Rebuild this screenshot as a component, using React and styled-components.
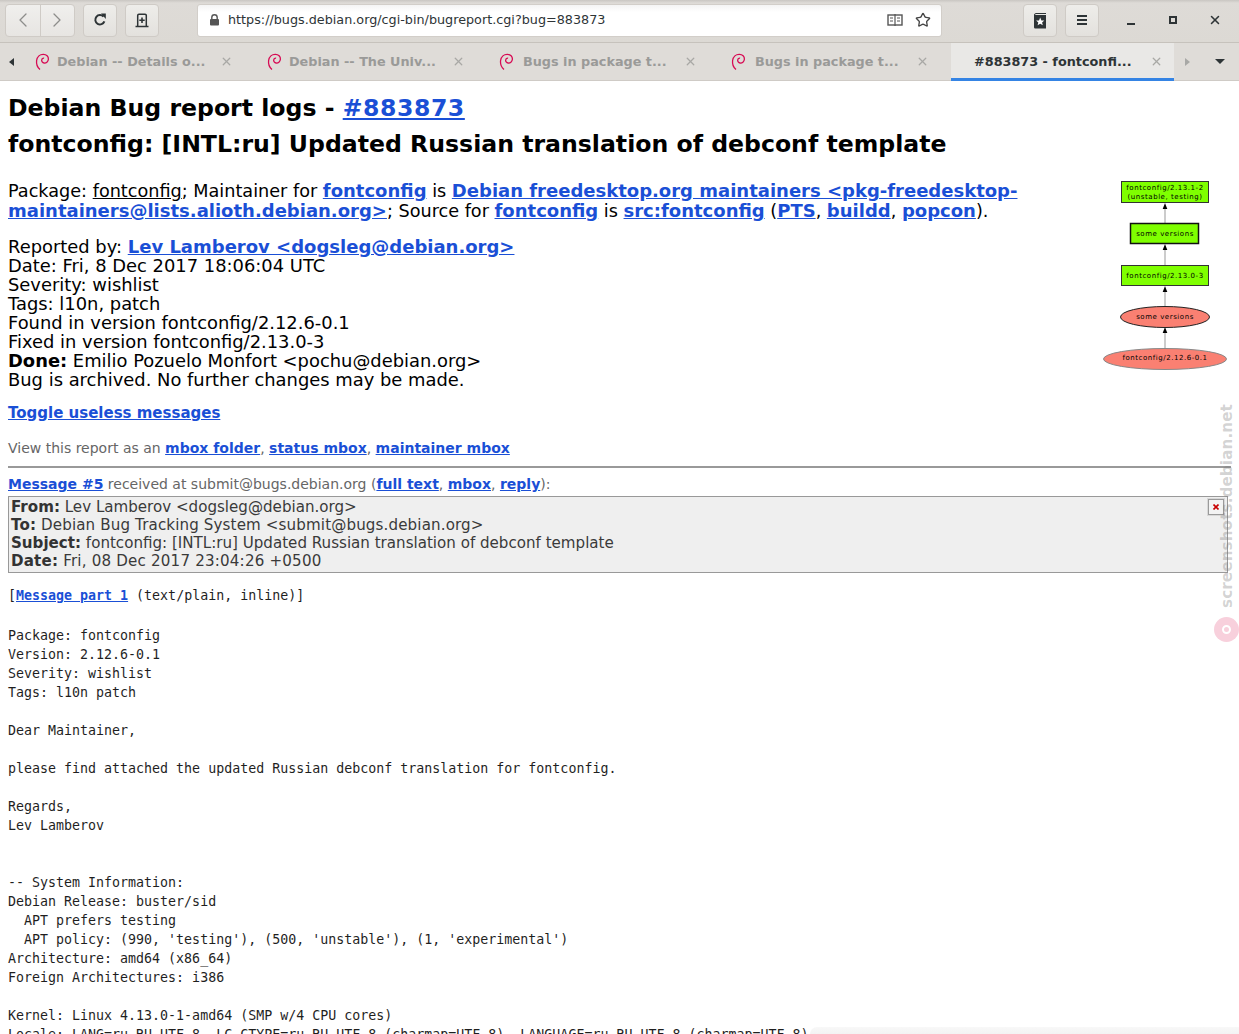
import React from "react";
import styled, { createGlobalStyle } from "styled-components";
import { ChevronLeft, ChevronRight, Star, X } from "lucide-react";

const GlobalStyle = createGlobalStyle`
  html, body {
    margin: 0;
    padding: 0;
    background: #fff;
    overflow: hidden;
    height: 1034px;
  }
`;

const Page = styled.div`
  position: relative;
  width: 1239px;
  height: 1034px;
  overflow: hidden;
  font-family: "DejaVu Sans", sans-serif;
  color: #000;
`;

const Toolbar = styled.div`
  height: 43px;
  box-sizing: border-box;
  display: flex;
  align-items: center;
  padding: 0 0 2px 5px;
  background: linear-gradient(#c9c6c2 0, #dedbd7 3px, #dcd9d4 100%);
  border-bottom: 1px solid #c6c2bc;
`;

const NavGroup = styled.div`
  display: flex;
  width: 70px;
  height: 33px;
  margin-right: 8px;
  box-sizing: border-box;
  background: linear-gradient(#f0efed, #e7e5e2);
  border: 1px solid #cfcbc6;
  border-radius: 4px;
`;

const NavButton = styled.div`
  flex: 1;
  display: flex;
  align-items: center;
  justify-content: center;
  color: #8d8d8b;
  & + & {
    border-left: 1px solid #cfcbc6;
  }
`;

const ToolButton = styled.div`
  width: 34px;
  height: 33px;
  margin-right: ${(p) => p.$gap}px;
  box-sizing: border-box;
  flex: none;
  display: flex;
  align-items: center;
  justify-content: center;
  background: linear-gradient(#eeedea, #e3e1dd);
  border: 1px solid #cfcbc6;
  border-radius: 4px;
`;

const UrlBar = styled.div`
  width: 745px;
  height: 33px;
  margin-right: 81px;
  flex: none;
  box-sizing: border-box;
  display: flex;
  align-items: center;
  padding: 0 10px 0 11px;
  background: linear-gradient(#f4f4f4 0, #fff 7px);
  border: 1px solid #d2cec9;
  border-radius: 3px;
  font-size: 12.77px;
  color: #2e3436;
`;

const UrlText = styled.span`
  flex: 1;
  margin: 0 0 2px 8px;
  white-space: nowrap;
`;

const ReaderIcon = styled.svg`
  margin-right: 12px;
`;

const WindowControls = styled.div`
  display: flex;
  margin-left: 11px;
`;

const WindowControl = styled.div`
  width: 42px;
  flex: none;
  display: flex;
  align-items: center;
  justify-content: center;
  color: #2e3436;
`;

const TabBar = styled.div`
  height: 38px;
  display: flex;
  align-items: stretch;
  background: #dfdcd8;
  border-bottom: 1px solid #cfcbc6;
  box-sizing: border-box;
`;

const ArrowSlot = styled.div`
  width: ${(p) => p.$w}px;
  flex: none;
  display: flex;
  align-items: center;
  justify-content: center;
`;

const Tab = styled.div`
  width: ${(p) => (p.$active ? 223 : 232)}px;
  flex: none;
  box-sizing: border-box;
  display: flex;
  align-items: center;
  padding: ${(p) => (p.$active ? "2px 0 0 23px" : "0 0 0 12px")};
  font-size: 12.8px;
  font-weight: bold;
  white-space: nowrap;
  color: ${(p) => (p.$active ? "#2e3436" : "#9a9a98")};
  background: ${(p) => (p.$active ? "#e9e8e6" : "transparent")};
  border-bottom: ${(p) => (p.$active ? "3px solid #3584e4" : "none")};
  margin-bottom: ${(p) => (p.$active ? "-1px" : "0")};
`;

const TabTitle = styled.span`
  width: ${(p) => p.$w}px;
  margin-left: ${(p) => p.$ml}px;
  flex: none;
`;

const TabClose = styled.span`
  display: flex;
  margin-left: ${(p) => p.$ml}px;
  color: #a9a8a5;
`;

const Content = styled.div`
  padding: 9px 8px 0;
  height: 953px;
  box-sizing: border-box;
  overflow: hidden;
  font-size: 17.9px;
  line-height: 19px;
`;

const Heading = styled.h1`
  margin: 0;
  font-size: 23.6px;
  line-height: 36px;
  font-weight: bold;
`;

const Graph = styled.svg`
  float: right;
  margin: 7px 4px 0 10px;
  display: block;
`;

const Para = styled.p`
  margin: ${(p) => p.$top || 0}px 0 0;
  line-height: ${(p) => p.$lh || 19}px;
  font-size: ${(p) => p.$size || 17.9}px;
  color: ${(p) => p.$color || "#000"};
`;

const Link = styled.a`
  color: #1a4fd6;
  font-weight: bold;
  text-decoration: underline;
`;

const BugLink = styled(Link)`
  letter-spacing: 0.55px;
`;

const BodyLink = styled(Link)`
  font-size: 18px;
`;

const PlainUnder = styled.span`
  text-decoration: underline;
`;

const Rule = styled.hr`
  margin: 8px 0;
  border: none;
  border-top: 2px solid #999;
  clear: both;
`;

const MessageLine = styled.div`
  font-size: 14px;
  line-height: 17px;
  color: #666;
`;

const HeaderBox = styled.div`
  position: relative;
  margin: 3px 3px 0 0;
  padding: 1px 2px 2px;
  background: #efefef;
  border: 1px solid #999;
  font-size: 15.1px;
  line-height: 18px;
  color: #3a3a3a;
  & b {
    color: #333;
  }
`;

const HeaderRow = styled.div`
  white-space: nowrap;
  letter-spacing: ${(p) => p.$track || 0}px;
`;

const CloseToggle = styled.div`
  position: absolute;
  top: 2px;
  right: 3px;
  width: 16px;
  height: 16px;
  box-sizing: border-box;
  background: #f3f3f3;
  border: 1px solid #9a9a9a;
  outline: 1px solid #d8d8d8;
  display: flex;
  align-items: center;
  justify-content: center;
  color: #c80000;
`;

const Pre = styled.pre`
  margin: ${(p) => p.$top}px 0 0;
  font-family: "DejaVu Sans Mono", monospace;
  font-size: 13.3px;
  line-height: 19px;
  color: #1f1f1f;
`;

const Watermark = styled.div`
  position: absolute;
  left: 1218px;
  top: 405px;
  height: 203px;
  writing-mode: vertical-rl;
  transform: rotate(180deg);
  font-size: 15.2px;
  font-weight: bold;
  letter-spacing: 0.1px;
  line-height: 18px;
  color: rgba(120, 120, 120, 0.33);
  white-space: nowrap;
`;

const WatermarkLogo = styled.div`
  position: absolute;
  left: 1214px;
  top: 617px;
  width: 25px;
  height: 25px;
  box-sizing: border-box;
  border-radius: 50%;
  background: #f8d0dc;
  display: flex;
  align-items: center;
  justify-content: center;
`;

const LogoHole = styled.div`
  width: 9px;
  height: 9px;
  box-sizing: border-box;
  border: 2px solid #fff;
  border-radius: 50%;
`;

const BottomFade = styled.div`
  position: absolute;
  left: 810px;
  right: 0;
  bottom: 0;
  height: 7px;
  background: linear-gradient(#f8f8f8, #f3f3f3);
  border-radius: 8px 0 0 0;
`;

function Swirl() {
  return (
    <svg width="16" height="18" viewBox="0 0 16 18" fill="none" stroke="#d70a53" strokeWidth="1.3">
      <path d="M5 16.5C2.5 14.5 1.2 11 1.6 7.5 2.1 3.6 5 1.2 8.4 1.3c3 .1 5.2 2.3 5 5-.2 2.4-2.3 4-4.3 3.7-1.6-.2-2.7-1.6-2.4-3.1.2-1.2 1.3-2 2.4-1.8" />
    </svg>
  );
}

function Arrow({ dir, color }) {
  const points = dir === "left" ? "6,1 6,9 1,5" : dir === "right" ? "1,1 1,9 6,5" : "0,1 10,1 5,6";
  return (
    <svg width={dir === "down" ? 10 : 7} height={dir === "down" ? 7 : 10} viewBox={dir === "down" ? "0 0 10 7" : "0 0 7 10"}>
      <polygon points={points} fill={color} />
    </svg>
  );
}

function VersionGraph() {
  const label = { fontFamily: "DejaVu Sans, sans-serif", fontSize: 7, fill: "#000", textAnchor: "middle", letterSpacing: 0.55 };
  const edges = [
    [34, 54],
    [75, 96],
    [117, 137],
    [158, 179],
  ];
  return (
    <Graph width="130" height="202" viewBox="0 0 130 202">
      {edges.map(([top, bottom]) => (
        <g key={top}>
          <line x1="68" y1={top + 4} x2="68" y2={bottom} stroke="#aaa" strokeWidth="1.2" />
          <polygon points={`68,${top} 65.7,${top + 6} 70.3,${top + 6}`} fill="#000" />
        </g>
      ))}
      <rect x="24.5" y="12.5" width="87" height="21" fill="#7fff00" stroke="#333" />
      <text x="68" y="21" {...label}>fontconfig/2.13.1-2</text>
      <text x="68" y="30" {...label}>(unstable, testing)</text>
      <rect x="33.5" y="54.5" width="68" height="20" fill="#7fff00" stroke="#111" strokeWidth="1.5" />
      <text x="68" y="67" {...label}>some versions</text>
      <rect x="24.5" y="96.5" width="87" height="20" fill="#7fff00" stroke="#333" />
      <text x="68" y="109" {...label}>fontconfig/2.13.0-3</text>
      <ellipse cx="68" cy="148" rx="44.5" ry="10.5" fill="#fa8072" stroke="#222" />
      <text x="68" y="150" {...label}>some versions</text>
      <ellipse cx="68" cy="190" rx="61.5" ry="10.5" fill="#fa8072" stroke="#888" />
      <text x="68" y="191" {...label}>fontconfig/2.12.6-0.1</text>
    </Graph>
  );
}

const tabs = [
  { title: "Debian -- Details o...", ml: 6, close: 13 },
  { title: "Debian -- The Univ...", ml: 6, close: 13 },
  { title: "Bugs in package t...", ml: 8, close: 11 },
  { title: "Bugs in package t...", ml: 8, close: 11 },
];

const body = `Package: fontconfig
Version: 2.12.6-0.1
Severity: wishlist
Tags: l10n patch

Dear Maintainer,

please find attached the updated Russian debconf translation for fontconfig.

Regards,
Lev Lamberov


-- System Information:
Debian Release: buster/sid
  APT prefers testing
  APT policy: (990, 'testing'), (500, 'unstable'), (1, 'experimental')
Architecture: amd64 (x86_64)
Foreign Architectures: i386

Kernel: Linux 4.13.0-1-amd64 (SMP w/4 CPU cores)
Locale: LANG=ru_RU.UTF-8, LC_CTYPE=ru_RU.UTF-8 (charmap=UTF-8), LANGUAGE=ru_RU.UTF-8 (charmap=UTF-8)`;

export default function App() {
  return (
    <Page>
      <GlobalStyle />
      <Toolbar>
        <NavGroup>
          <NavButton><ChevronLeft size={24} strokeWidth={1.3} /></NavButton>
          <NavButton><ChevronRight size={24} strokeWidth={1.3} /></NavButton>
        </NavGroup>
        <ToolButton $gap={8}>
          <svg width="14" height="14" viewBox="0 0 14 14" fill="none">
            <path d="M11.4 8.4A4.7 4.7 0 1 1 10.5 3.6" stroke="#2e3436" strokeWidth="2" />
            <polygon points="8,0.5 12.8,0.5 12.8,6 " fill="#2e3436" />
          </svg>
        </ToolButton>
        <ToolButton $gap={38}>
          <svg width="14" height="15" viewBox="0 0 14 15" fill="none" stroke="#2e3436">
            <path d="M2.7 13V2.5a1.2 1.2 0 0 1 1.2-1.2h6.2a1.2 1.2 0 0 1 1.2 1.2V13" strokeWidth="1.5" />
            <path d="M0.5 13.5h13" strokeWidth="1.5" />
            <path d="M7 4.5v5.5M4.3 7.2h5.4" strokeWidth="1.6" />
          </svg>
        </ToolButton>
        <UrlBar>
          <svg width="11" height="12" viewBox="0 0 11 12">
            <path d="M2.8 5V3.5a2.7 2.7 0 0 1 5.4 0V5" fill="none" stroke="#555" strokeWidth="1.4" />
            <rect x="1" y="5" width="9" height="6.5" rx="1" fill="#555" />
          </svg>
          <UrlText>https://bugs.debian.org/cgi-bin/bugreport.cgi?bug=883873</UrlText>
          <ReaderIcon width="16" height="14" viewBox="0 0 16 14" fill="none" stroke="#555">
            <rect x="1" y="2" width="14" height="10" strokeWidth="1.4" />
            <path d="M8 1v12" strokeWidth="1.2" />
            <path d="M3 5h3M3 8h3M10 5h3M10 8h3" strokeWidth="1.2" />
          </ReaderIcon>
          <Star size={16} strokeWidth={2} color="#444" />
        </UrlBar>
        <ToolButton $gap={8}>
          <svg width="14" height="17" viewBox="0 0 14 17">
            <path d="M1 3.2C1 2 2 1 3.2 1H13v1H3.2C2.6 2 2.1 2.4 2 3h11v13.5H2.2A1.2 1.2 0 0 1 1 15.3z" fill="#2e3436" />
            <polygon points="7.2,5.5 8.4,8.4 11.3,8.6 9.1,10.5 9.8,13.3 7.2,11.8 4.6,13.3 5.3,10.5 3.1,8.6 6,8.4" fill="#fff" />
          </svg>
        </ToolButton>
        <ToolButton $gap={0}>
          <svg width="12" height="12" viewBox="0 0 12 12" fill="#2e3436">
            <rect x="1" y="1" width="10" height="2" />
            <rect x="1" y="5" width="10" height="2" />
            <rect x="1" y="9" width="10" height="2" />
          </svg>
        </ToolButton>
        <WindowControls>
          <WindowControl>
            <svg width="12" height="12" viewBox="0 0 12 12" fill="#2e3436"><rect x="2" y="9" width="8" height="2" /></svg>
          </WindowControl>
          <WindowControl>
            <svg width="12" height="12" viewBox="0 0 12 12" fill="none" stroke="#2e3436" strokeWidth="2"><rect x="3" y="3" width="6" height="6" /></svg>
          </WindowControl>
          <WindowControl><X size={14} strokeWidth={2.6} /></WindowControl>
        </WindowControls>
      </Toolbar>
      <TabBar>
        <ArrowSlot $w={23}><Arrow dir="left" color="#2e3436" /></ArrowSlot>
        {tabs.map((tab, i) => (
          <Tab key={i}>
            <Swirl />
            <TabTitle $w={150} $ml={tab.ml}>{tab.title}</TabTitle>
            <TabClose $ml={tab.close}><X size={13} strokeWidth={2.4} /></TabClose>
          </Tab>
        ))}
        <Tab $active>
          <TabTitle $w={159} $ml={0}>#883873 - fontconfi...</TabTitle>
          <TabClose $ml={17}><X size={13} strokeWidth={2.4} /></TabClose>
        </Tab>
        <ArrowSlot $w={26}><Arrow dir="right" color="#a8a8a6" /></ArrowSlot>
        <ArrowSlot $w={40}><Arrow dir="down" color="#2e3436" /></ArrowSlot>
      </TabBar>
      <Content>
        <Heading>
          Debian Bug report logs - <BugLink>#883873</BugLink>
        </Heading>
        <Heading>fontconfig: [INTL:ru] Updated Russian translation of debconf template</Heading>
        <VersionGraph />
        <Para $top={19} $lh={20} $size={17.65}>
          Package: <PlainUnder>fontconfig</PlainUnder>; Maintainer for <BodyLink>fontconfig</BodyLink> is{" "}
          <BodyLink>Debian freedesktop.org maintainers &lt;pkg-freedesktop-maintainers@lists.alioth.debian.org&gt;</BodyLink>;
          Source for <BodyLink>fontconfig</BodyLink> is <BodyLink>src:fontconfig</BodyLink> (<BodyLink>PTS</BodyLink>,{" "}
          <BodyLink>buildd</BodyLink>, <BodyLink>popcon</BodyLink>).
        </Para>
        <Para $top={16}>Reported by: <BodyLink>Lev Lamberov &lt;dogsleg@debian.org&gt;</BodyLink></Para>
        <Para>Date: Fri, 8 Dec 2017 18:06:04 UTC</Para>
        <Para>Severity: wishlist</Para>
        <Para>Tags: l10n, patch</Para>
        <Para>Found in version fontconfig/2.12.6-0.1</Para>
        <Para>Fixed in version fontconfig/2.13.0-3</Para>
        <Para><b>Done:</b> Emilio Pozuelo Monfort &lt;pochu@debian.org&gt;</Para>
        <Para>Bug is archived. No further changes may be made.</Para>
        <Para $top={15} $size={15}><Link>Toggle useless messages</Link></Para>
        <Para $top={16} $size={14} $color="#666">
          View this report as an <Link>mbox folder</Link>, <Link>status mbox</Link>, <Link>maintainer mbox</Link>
        </Para>
        <Rule />
        <MessageLine>
          <Link>Message #5</Link> received at submit@bugs.debian.org (<Link>full text</Link>, <Link>mbox</Link>,{" "}
          <Link>reply</Link>):
        </MessageLine>
        <HeaderBox>
          <CloseToggle>
            <svg width="6" height="6" viewBox="0 0 6 6" stroke="currentColor" strokeWidth="1.6"><path d="M0.5 0.5l5 5M5.5 0.5l-5 5" /></svg>
          </CloseToggle>
          <HeaderRow><b>From:</b> Lev Lamberov &lt;dogsleg@debian.org&gt;</HeaderRow>
          <HeaderRow $track={0.13}><b>To:</b> Debian Bug Tracking System &lt;submit@bugs.debian.org&gt;</HeaderRow>
          <HeaderRow><b>Subject:</b> fontconfig: [INTL:ru] Updated Russian translation of debconf template</HeaderRow>
          <HeaderRow $track={0.19}><b>Date:</b> Fri, 08 Dec 2017 23:04:26 +0500</HeaderRow>
        </HeaderBox>
        <Pre $top={13}>[<Link>Message part 1</Link> (text/plain, inline)]</Pre>
        <Pre $top={21}>{body}</Pre>
      </Content>
      <Watermark>screenshots.debian.net</Watermark>
      <WatermarkLogo><LogoHole /></WatermarkLogo>
      <BottomFade />
    </Page>
  );
}
